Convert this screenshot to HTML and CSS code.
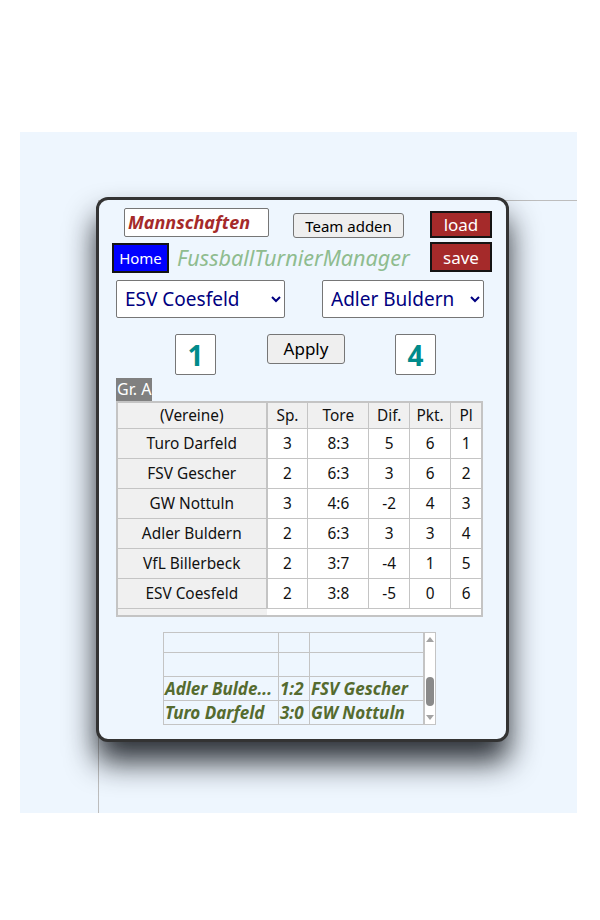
FILE: index.html
```html
<!DOCTYPE html>
<html lang="de">
<head>
<meta charset="utf-8">
<title>FussballTurnierManager</title>
<link rel="stylesheet" href="styles.css">
</head>
<body>
<div class="stage">
  <div class="guide"></div>
  <div class="card">
    <div class="row row-1">
      <div class="name-input">Mannschaften</div>
      <button class="btn btn-std btn-team">Team adden</button>
      <button class="btn btn-red btn-load">load</button>
    </div>
    <div class="row row-2">
      <button class="btn btn-home">Home</button>
      <div class="title">FussballTurnierManager</div>
      <button class="btn btn-red btn-save">save</button>
    </div>
    <div class="row row-3">
      <select class="team-select sel-1"><option>ESV Coesfeld</option></select>
      <select class="team-select sel-2"><option>Adler Buldern</option></select>
    </div>
    <div class="row row-4">
      <div class="score score-1">1</div>
      <button class="btn btn-std btn-apply">Apply</button>
      <div class="score score-2">4</div>
    </div>
    <div class="group-label">Gr. A</div>
    <div class="standings">
      <table>
        <thead>
          <tr><th class="c-team">(Vereine)</th><th class="c-sp">Sp.</th><th class="c-tore">Tore</th><th class="c-dif">Dif.</th><th class="c-pkt">Pkt.</th><th class="c-pl">Pl</th></tr>
        </thead>
        <tbody>
          <tr><td class="c-team">Turo Darfeld</td><td>3</td><td>8:3</td><td>5</td><td>6</td><td>1</td></tr>
          <tr><td class="c-team">FSV Gescher</td><td>2</td><td>6:3</td><td>3</td><td>6</td><td>2</td></tr>
          <tr><td class="c-team">GW Nottuln</td><td>3</td><td>4:6</td><td>-2</td><td>4</td><td>3</td></tr>
          <tr><td class="c-team">Adler Buldern</td><td>2</td><td>6:3</td><td>3</td><td>3</td><td>4</td></tr>
          <tr><td class="c-team">VfL Billerbeck</td><td>2</td><td>3:7</td><td>-4</td><td>1</td><td>5</td></tr>
          <tr><td class="c-team">ESV Coesfeld</td><td>2</td><td>3:8</td><td>-5</td><td>0</td><td>6</td></tr>
        </tbody>
      </table>
    </div>
    <div class="matches">
      <table class="match-table">
        <tr class="m-first"><td class="m-home"></td><td class="m-res"></td><td class="m-away"></td></tr>
        <tr><td class="m-home"></td><td class="m-res"></td><td class="m-away"></td></tr>
        <tr><td class="m-home">Adler Bulde...</td><td class="m-res">1:2</td><td class="m-away">FSV Gescher</td></tr>
        <tr><td class="m-home">Turo Darfeld</td><td class="m-res">3:0</td><td class="m-away">GW Nottuln</td></tr>
      </table>
      <div class="scrollbar">
        <div class="arrow-up"></div>
        <div class="track"><div class="thumb"></div></div>
        <div class="arrow-down"></div>
      </div>
    </div>
  </div>
</div>
</body>
</html>
```
FILE: styles.css
```css
html, body {
  margin: 0;
  padding: 0;
  background: #ffffff;
}

body {
  font-family: "Noto Sans", "Open Sans", sans-serif;
}

.stage {
  position: relative;
  margin: 132px 0 0 20px;
  width: 557px;
  height: 681px;
  background: #eef6fe;
  overflow: hidden;
  padding: 65px 0 0 76px;
  box-sizing: border-box;
}

.guide {
  position: absolute;
  left: 78px;
  top: 68px;
  width: 700px;
  height: 800px;
  border-top: 1px solid #bdbdbd;
  border-left: 1px solid #bdbdbd;
}

.card {
  position: relative;
  width: 413px;
  height: 545px;
  box-sizing: border-box;
  border: 3px solid #333333;
  border-radius: 12px;
  background: #eef6fe;
  box-shadow: 0 20px 30px rgba(10, 14, 20, 0.85);
}

.row {
  display: flex;
  align-items: flex-start;
}

.btn {
  font-family: "Noto Sans", sans-serif;
  padding: 0;
  box-sizing: border-box;
  cursor: pointer;
}

.btn-std {
  background: #efefef;
  border: 1px solid #767676;
  border-radius: 3px;
  color: #000000;
}

.btn-red {
  background: #a52a2a;
  border: 2px solid #141414;
  color: #ffffff;
  font-size: 17px;
  width: 62px;
  margin-left: auto;
  margin-right: 14px;
}

/* row 1 */
.row-1 {
  padding-top: 8px;
  height: 38px;
  box-sizing: border-box;
}

.name-input {
  margin-left: 25px;
  width: 145px;
  height: 29px;
  box-sizing: border-box;
  border: 1px solid #767676;
  border-radius: 2px;
  background: #ffffff;
  color: #a52a2a;
  font-weight: bold;
  font-style: italic;
  font-size: 18px;
  line-height: 26px;
  padding-left: 3px;
  white-space: nowrap;
  overflow: hidden;
}

.btn-team {
  margin-left: 24px;
  margin-top: 5px;
  width: 111px;
  height: 25px;
  font-size: 15px;
  line-height: 22px;
}

.btn-load {
  margin-top: 3px;
  height: 27px;
  line-height: 22px;
}

/* row 2 */
.row-2 {
  margin-top: 4px;
}

.btn-home {
  margin-left: 13px;
  margin-top: 1px;
  width: 57px;
  height: 30px;
  background: #0000ff;
  border: 2px solid #141414;
  color: #ffffff;
  font-size: 15px;
}

.title {
  margin-left: 8px;
  margin-top: 3px;
  font-style: italic;
  font-size: 21.6px;
  line-height: 26px;
  color: #8fbc8f;
  white-space: nowrap;
}

.btn-save {
  height: 30px;
  line-height: 25px;
}

/* row 3 */
.row-3 {
  margin-top: 7px;
  padding: 0 22px 0 17px;
  justify-content: space-between;
}

.team-select {
  height: 38px;
  box-sizing: border-box;
  border: 1px solid #767676;
  border-radius: 2px;
  background: #ffffff;
  color: #000080;
  font-family: "Noto Sans", sans-serif;
  font-size: 19px;
  padding: 0 4px;
}

.sel-1 { width: 169px; }
.sel-2 { width: 162px; }

/* row 4 */
.row-4 {
  margin-top: 16px;
}

.score {
  width: 41px;
  height: 41px;
  box-sizing: border-box;
  border: 1px solid #767676;
  border-radius: 2px;
  background: #ffffff;
  color: #008b8b;
  font-weight: bold;
  font-size: 28px;
  line-height: 40px;
  text-align: center;
}

.score-1 { margin-left: 76px; }
.score-2 { margin-left: 50px; }

.btn-apply {
  margin-left: 51px;
  width: 78px;
  height: 30px;
  font-size: 17px;
  line-height: 26px;
}

/* group label */
.group-label {
  margin: 3px 0 0 17px;
  display: inline-block;
  background: #808080;
  color: #ffffff;
  font-size: 16px;
  line-height: 23px;
  height: 23px;
  padding: 0 1px;
  vertical-align: top;
}

/* standings */
.standings {
  margin-left: 17px;
  width: 367px;
  height: 216px;
  box-sizing: border-box;
  border: 2px solid #c4c4c4;
  background: linear-gradient(to right, #f0f0f0 149px, #ffffff 149px);
}

.standings table {
  border-collapse: collapse;
  font-size: 15.4px;
  color: #111111;
  table-layout: fixed;
}

.standings th,
.standings td {
  border: 1px solid #c4c4c4;
  text-align: center;
  padding: 0;
  font-weight: normal;
  background: #ffffff;
}

.standings th {
  background: #f0f0f0;
  height: 25px;
  border-top: none;
}

.standings td {
  height: 29px;
}

.standings .c-team {
  background: #f0f0f0;
  width: 148px;
  border-left: none;
  border-right: 2px solid #c4c4c4;
}

.standings td.c-team { background: #f0f0f0; }

.c-sp, .c-dif, .c-pkt { width: 40px; }
.c-tore { width: 60px; }
.c-pl { width: 30px; }

.standings th:last-child,
.standings td:last-child {
  border-right: none;
}

/* matches */
.matches {
  margin: 15px 0 0 64px;
  width: 273px;
  height: 93px;
  box-sizing: border-box;
  border: 1px solid #c4c4c4;
  display: flex;
}

.match-table {
  border-collapse: collapse;
  width: 258px;
  table-layout: fixed;
  font-size: 17px;
  font-weight: bold;
  font-style: italic;
  color: #556b2f;
}

.match-table td {
  border: 1px solid #c4c4c4;
  height: 23px;
  padding: 0 0 0 1px;
  white-space: nowrap;
  line-height: 22px;
}

.match-table tr.m-first td {
  height: 19px;
  border-top: none;
}

.match-table td:first-child { border-left: none; }

.m-home { width: 113px; }
.m-res { width: 29px; }
.m-away { width: 112px; }

.scrollbar {
  width: 14px;
  background: #ffffff;
  display: flex;
  flex-direction: column;
  align-items: center;
  border-left: 1px solid #c4c4c4;
}

.arrow-up,
.arrow-down {
  width: 0;
  height: 0;
  border-left: 4px solid transparent;
  border-right: 4px solid transparent;
}

.arrow-up {
  margin-top: 4px;
  border-bottom: 5px solid #a3a3a3;
}

.arrow-down {
  margin-bottom: 4px;
  border-top: 5px solid #a3a3a3;
}

.track {
  flex: 1;
  width: 100%;
  display: flex;
  flex-direction: column;
  align-items: center;
}

.thumb {
  margin-top: 35px;
  width: 8px;
  height: 29px;
  border-radius: 4px;
  background: #8a8a8a;
}
```
